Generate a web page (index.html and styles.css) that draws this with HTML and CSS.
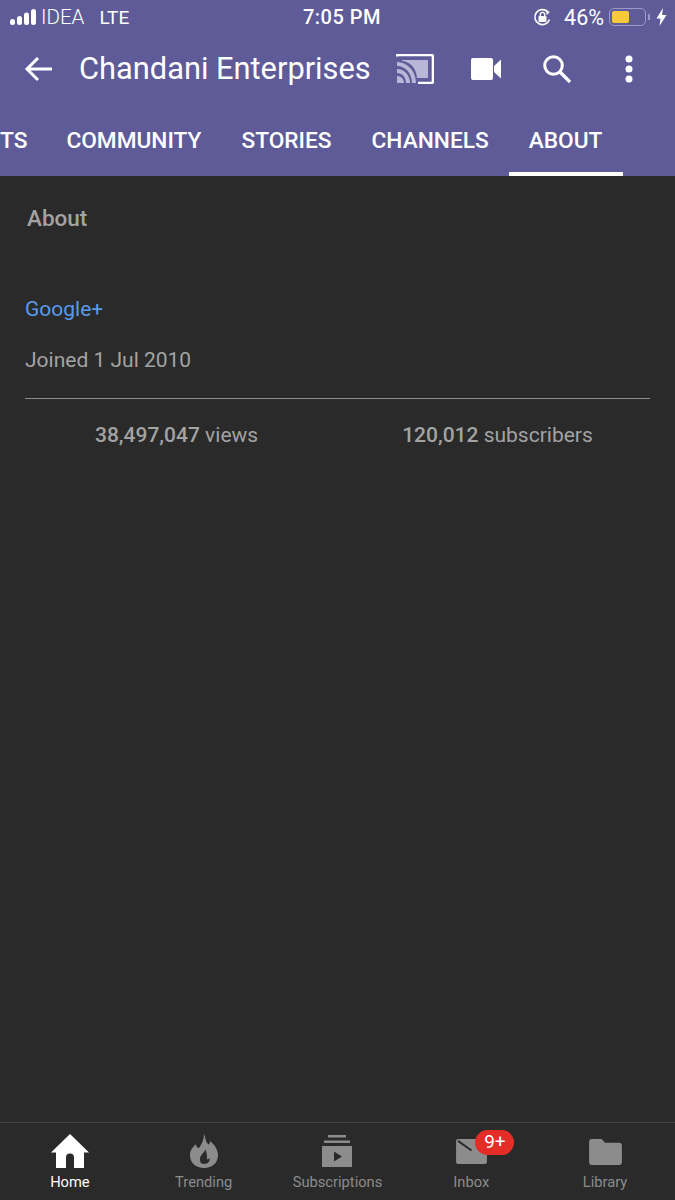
FILE: index.html
```html
<!DOCTYPE html>
<html lang="en">

<head>
  <meta charset="UTF-8" />
  <meta name="viewport" content="width=device-width, initial-scale=1.0" />
  <title>Chandani Enterprises - About</title>
  <link rel="stylesheet" href="styles.css">
</head>

<body>
  <div class="page">
    <header class="header">
      <div class="status-bar">
        <div class="status-left">
          <svg class="signal" width="27" height="17" viewBox="0 0 27 17">
            <rect x="0" y="10" width="5" height="6" rx="2.500" />
            <rect x="7" y="7" width="5" height="9" rx="2.500" />
            <rect x="14" y="3.500" width="5" height="12.500" rx="2.500" />
            <rect x="21" y="0" width="5" height="16" rx="2.500" />
          </svg>
          <span class="carrier">IDEA</span>
          <span class="network">LTE</span>
        </div>
        <div class="status-time">7:05 PM</div>
        <div class="status-right">
          <svg class="rotation-lock" width="19" height="19" viewBox="0 0 19 19">
            <path d="M16.500 11.500A7.500 7.500 0 1 1 14.500 3.600" fill="none" stroke="#fff" stroke-width="1.600" />
            <path d="M13 1.500l3.800 2.800-3.200 2.800z" fill="#fff" />
            <rect x="5.500" y="8" width="8" height="6" rx="1" fill="#fff" />
            <path d="M7.300 8V6.600a2.200 2.200 0 0 1 4.400 0V8" fill="none" stroke="#fff" stroke-width="1.300" />
          </svg>
          <span class="battery-text">46%</span>
          <div class="battery">
            <div class="battery-level"></div>
          </div>
          <div class="battery-tip"></div>
          <svg class="bolt" width="11" height="18" viewBox="0 0 11 18">
            <path d="M7 0L0.500 10.500H4.500L3.500 18L10.500 7H6z" fill="#fff" />
          </svg>
        </div>
      </div>

      <div class="toolbar">
        <svg class="back" width="30" height="26" viewBox="0 0 30 26">
          <path d="M28 13H3M14 2L3 13l11 11" fill="none" stroke="#fff" stroke-width="3" />
        </svg>
        <h1 class="title">Chandani Enterprises</h1>
        <div class="actions">
          <svg class="cast" width="38" height="30" viewBox="0 0 38 30">
            <path d="M1 2.500V2a1 1 0 0 1 1-1h33a2 2 0 0 1 2 2v24a2 2 0 0 1-2 2H22" fill="none" stroke="#fff" stroke-width="2.600" />
            <path d="M6 6h26v18H21C20 14 15 8 6 7z" fill="#b9b6d8" />
            <path d="M1 8c10 0 19 9 19 21h-4C16 19 9 12 1 12zM1 15c7 0 13 6 13 14h-4C10 23 6 19 1 19zM1 22c4 0 7 3 7 7H1z" fill="#b9b6d8" />
          </svg>
          <svg class="camera" width="31" height="22" viewBox="0 0 31 22">
            <path d="M2 0h18a2 2 0 0 1 2 2v18a2 2 0 0 1-2 2H2a2 2 0 0 1-2-2V2a2 2 0 0 1 2-2zM23 8l7-6.500v19L23 14z" fill="#fff" />
          </svg>
          <svg class="search" width="30" height="30" viewBox="0 0 30 30">
            <circle cx="11.500" cy="11.500" r="8.800" fill="none" stroke="#fff" stroke-width="3" />
            <path d="M18 18l10 10" stroke="#fff" stroke-width="3.400" />
          </svg>
          <svg class="more" width="10" height="28" viewBox="0 0 10 28">
            <circle cx="5" cy="4" r="3.500" fill="#fff" />
            <circle cx="5" cy="14" r="3.500" fill="#fff" />
            <circle cx="5" cy="24" r="3.500" fill="#fff" />
          </svg>
        </div>
      </div>

      <nav class="tabs">
        <a class="tab">TS</a>
        <a class="tab">COMMUNITY</a>
        <a class="tab">STORIES</a>
        <a class="tab">CHANNELS</a>
        <a class="tab active">ABOUT</a>
      </nav>
    </header>

    <main class="content">
      <h2 class="section-title">About</h2>
      <a class="link">Google+</a>
      <p class="joined">Joined 1 Jul 2010</p>
      <div class="stats">
        <span class="stat"><b>38,497,047</b> views</span>
        <span class="stat"><b>120,012</b> subscribers</span>
      </div>
    </main>

    <footer class="bottom-nav">
      <div class="nav-item active">
        <div class="nav-icon">
          <svg width="38" height="34" viewBox="0 0 38 34">
            <path d="M19 0L38 18.500H33V34H23V23.500a4 4 0 0 0-8 0V34H5V18.500H0z" fill="#fff" />
          </svg>
        </div>
        <span>Home</span>
      </div>
      <div class="nav-item">
        <div class="nav-icon">
          <svg width="28" height="34" viewBox="0 0 28 34">
            <path fill-rule="evenodd" d="M14 0c2 4 1 7 4 10 1 1 2 0 2-3 5 4 8 9 8 14 0 8-6 13-14 13S0 29 0 21c0-5 3-8 6-11 0 2 1 4 3 4 3-4 5-9 5-14zM15 15c1 3-6 6-5 11 0 3 2 4 4 4 4 0 6-3 6-6-1 1-2 2-3 1 0-3 0-7-2-10z" fill="#8c8c8c" />
          </svg>
        </div>
        <span>Trending</span>
      </div>
      <div class="nav-item">
        <div class="nav-icon">
          <svg width="32" height="32" viewBox="0 0 32 32">
            <path d="M7 0h18v2.500H7zM3 5.500h26V8H3zM1 11h30v21H1zM13 16.500v10l8-5z" fill="#8c8c8c" fill-rule="evenodd" />
          </svg>
        </div>
        <span>Subscriptions</span>
      </div>
      <div class="nav-item">
        <div class="nav-icon">
          <svg width="33" height="27" viewBox="0 0 34 28">
            <path d="M3 1h28a2 2 0 0 1 2 2v22a2 2 0 0 1-2 2H3a2 2 0 0 1-2-2V3a2 2 0 0 1 2-2z" fill="#8c8c8c" />
            <path d="M3 3l14 10" stroke="#2a2a2a" stroke-width="2" />
          </svg>
        </div>
        <span class="badge">9+</span>
        <span>Inbox</span>
      </div>
      <div class="nav-item">
        <div class="nav-icon">
          <svg width="33" height="27" viewBox="0 0 34 28">
            <path d="M3 1h10l3.500 4H31a3 3 0 0 1 3 3v17a3 3 0 0 1-3 3H3a3 3 0 0 1-3-3V4a3 3 0 0 1 3-3z" fill="#8c8c8c" />
          </svg>
        </div>
        <span>Library</span>
      </div>
    </footer>
  </div>
</body>

</html>
```

FILE: styles.css
```css
* {
  box-sizing: border-box;
}

body {
  margin: 0;
  background: #2a2a2a;
  font-family: Roboto, "Liberation Sans", sans-serif;
}

.page {
  width: 675px;
  height: 1200px;
  display: flex;
  flex-direction: column;
  overflow: hidden;
}

.header {
  background: #5e5b98;
  color: #fff;
}

.status-bar {
  height: 34px;
  padding: 0 8px 0 10px;
  display: grid;
  grid-template-columns: 1fr auto 1fr;
  align-items: center;
  font-size: 19px;
}

.status-left {
  display: flex;
  align-items: center;
}

.signal {
  fill: #fff;
  margin-right: 4px;
}

.carrier {
  font-size: 20.500px;
  font-weight: 300;
  margin-right: 15px;
}

.status-time {
  padding-left: 7px;
  font-size: 20px;
  font-weight: 500;
  letter-spacing: 0.5px;
}

.status-right {
  display: flex;
  align-items: center;
  justify-content: flex-end;
}

.battery-text {
  font-size: 21.500px;
  margin: 0 5px 0 12px;
}

.battery {
  width: 37px;
  height: 18px;
  padding: 2px;
  border: 1.500px solid #9a98c8;
  border-radius: 5px;
}

.battery-level {
  width: 17px;
  height: 100%;
  background: #f8c93a;
  border-radius: 2px;
}

.battery-tip {
  width: 2px;
  height: 6px;
  margin: 0 6px 0 2px;
  background: #9a98c8;
}

.toolbar {
  height: 70px;
  padding: 0 0 0 24px;
  display: flex;
  align-items: center;
}

.title {
  margin: 0 0 2px 25px;
  font-size: 30.800px;
  font-weight: 400;
  white-space: nowrap;
}

.actions {
  margin-left: 25px;
  display: flex;
  align-items: center;
}

.camera {
  margin-left: 37px;
}

.search {
  margin-left: 40px;
}

.more {
  margin-left: 52px;
}

.tabs {
  height: 72px;
  display: flex;
}

.tab {
  flex: none;
  padding: 4px 20px 0;
  display: flex;
  align-items: center;
  font-size: 22.700px;
  font-weight: 500;
  border-bottom: 4px solid transparent;
}

.tab:first-child {
  padding: 4px 19px 0 0;
}

.tab.active {
  padding-right: 21px;
  border-bottom-color: #fff;
}

.content {
  flex: 1;
  padding: 0 25px;
  color: #a3a3a3;
  font-size: 21px;
}

.section-title {
  margin: 28px 0 0 2px;
  font-size: 22.500px;
  line-height: 28px;
  font-weight: 500;
}

.link {
  display: block;
  margin-top: 65px;
  color: #5a9ae6;
  line-height: 24px;
}

.joined {
  margin: 27px 0 0;
  line-height: 24px;
  padding-bottom: 26px;
  border-bottom: 1px solid #8c8c8c;
}

.stats {
  margin-top: 24px;
  padding-left: 70px;
  display: flex;
  gap: 144px;
  line-height: 24px;
}

.stat b {
  font-weight: 500;
}

.bottom-nav {
  height: 78px;
  padding: 11px 3px 0;
  border-top: 1px solid #444;
  display: grid;
  grid-template-columns: repeat(5, 1fr);
}

.nav-item {
  position: relative;
  display: flex;
  flex-direction: column;
  align-items: center;
  color: #8c8c8c;
  font-size: 14.700px;
  line-height: 18px;
}

.nav-icon {
  height: 34px;
  margin-bottom: 5px;
  display: flex;
  align-items: center;
}

.nav-item.active {
  color: #fff;
}

.badge {
  position: absolute;
  top: -4px;
  left: 71px;
  width: 39px;
  height: 25px;
  border-radius: 13px;
  background: #e52d27;
  color: #fff;
  font-size: 19px;
  line-height: 24px;
  text-align: center;
}
```
